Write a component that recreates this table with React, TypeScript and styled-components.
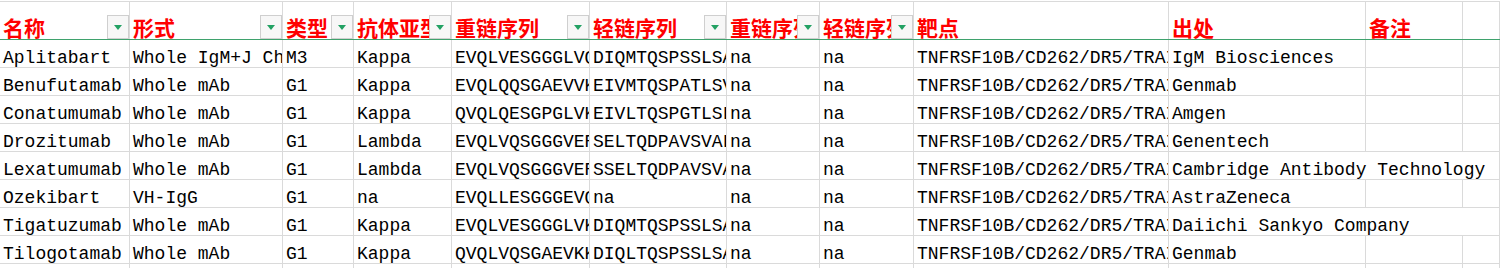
import React from "react";
import styled, { createGlobalStyle } from "styled-components";

const GlobalStyle = createGlobalStyle`
  html, body { margin: 0; padding: 0; background: #ffffff; overflow: hidden; }
  * { box-sizing: border-box; }
`;

const COLS = "130px 153px 71px 98px 138px 137px 93px 94px 255px 197px 97px 1fr";
const GRID = "#dadada";

const Sheet = styled.div`
  width: 1500px;
  height: 268px;
  overflow: hidden;
  padding-top: 1px;
`;

const HeaderRow = styled.div`
  display: grid;
  grid-template-columns: ${COLS};
  height: 39px;
  border-top: 1px solid ${GRID};
  border-bottom: 1px solid #3fa26d;
`;

const HeaderCell = styled.div`
  position: relative;
  display: flex;
  align-items: flex-end;
  overflow: hidden;
  white-space: nowrap;
  border-right: 1px solid ${GRID};
  padding: 0 0 1px 3px;
  font-family: "Noto Sans CJK SC", "Noto Sans", sans-serif;
  font-weight: 700;
  font-size: 21px;
  line-height: 1;
  color: #ff0000;
`;

const FilterButton = styled.div`
  position: absolute;
  right: 0;
  bottom: 0;
  width: 22px;
  height: 24px;
  border: 1px solid #cfcfcf;
  background: #f7f7f7;
  display: flex;
  align-items: center;
  justify-content: center;
`;

const Row = styled.div`
  display: grid;
  grid-template-columns: ${COLS};
  height: 28px;
  border-bottom: 1px solid ${GRID};
`;

const Cell = styled.div<{ $span?: number }>`
  grid-column: span ${(p) => p.$span ?? 1};
  overflow: hidden;
  white-space: nowrap;
  border-right: 1px solid ${GRID};
  padding: 9px 0 0 3px;
  font-family: "Liberation Mono", "DejaVu Sans Mono", monospace;
  font-size: 18px;
  line-height: 18px;
  color: #000000;
`;

const headers = [
  { t: "名称", f: true },
  { t: "形式", f: true },
  { t: "类型", f: true },
  { t: "抗体亚型", f: true },
  { t: "重链序列", f: true },
  { t: "轻链序列", f: true },
  { t: "重链序列ID", f: true },
  { t: "轻链序列ID", f: true },
  { t: "靶点", f: false },
  { t: "出处", f: false },
  { t: "备注", f: false },
  { t: "", f: false },
];

const TARGET = "TNFRSF10B/CD262/DR5/TRAILR2";

const rows: string[][] = [
  ["Aplitabart", "Whole IgM+J Chain", "M3", "Kappa", "EVQLVESGGGLVQPGGSLRLSCAAS", "DIQMTQSPSSLSASVGDRVTITC", "na", "na", TARGET, "IgM Biosciences"],
  ["Benufutamab", "Whole mAb", "G1", "Kappa", "EVQLQQSGAEVVKPGASVKVSCKAS", "EIVMTQSPATLSVSPGERATLSC", "na", "na", TARGET, "Genmab"],
  ["Conatumumab", "Whole mAb", "G1", "Kappa", "QVQLQESGPGLVKPSQTLSLTCTVS", "EIVLTQSPGTLSLSPGERATLSC", "na", "na", TARGET, "Amgen"],
  ["Drozitumab", "Whole mAb", "G1", "Lambda", "EVQLVQSGGGVERPGGSLRLSCAAS", "SELTQDPAVSVALGQTVRITC", "na", "na", TARGET, "Genentech"],
  ["Lexatumumab", "Whole mAb", "G1", "Lambda", "EVQLVQSGGGVERPGGSLRLSCAAS", "SSELTQDPAVSVALGQTVRITC", "na", "na", TARGET, "Cambridge Antibody Technology"],
  ["Ozekibart", "VH-IgG", "G1", "na", "EVQLLESGGGEVQPGGSLRLSCAAS", "na", "na", "na", TARGET, "AstraZeneca"],
  ["Tigatuzumab", "Whole mAb", "G1", "Kappa", "EVQLVESGGGLVKPGGSLKLSCAAS", "DIQMTQSPSSLSASVGDRVTITC", "na", "na", TARGET, "Daiichi Sankyo Company"],
  ["Tilogotamab", "Whole mAb", "G1", "Kappa", "QVQLVQSGAEVKKPGASVKVSCKAS", "DIQLTQSPSSLSASVGDRVTITC", "na", "na", TARGET, "Genmab"],
];

const Triangle = () => (
  <svg width="8" height="5" viewBox="0 0 8 5">
    <polygon points="0,0 8,0 4,5" fill="#22a163" />
  </svg>
);

export default function App() {
  return (
    <>
      <GlobalStyle />
      <Sheet>
        <HeaderRow>
          {headers.map((h, i) => (
            <HeaderCell key={i}>
              {h.t}
              {h.f && (
                <FilterButton>
                  <Triangle />
                </FilterButton>
              )}
            </HeaderCell>
          ))}
        </HeaderRow>
        {rows.map((r, ri) => {
          const spill = r[9].length * 10.8 + 3 > 197;
          return (
            <Row key={ri}>
              {r.map((v, ci) =>
                ci === 9 ? (
                  <Cell key={ci} $span={spill ? 3 : 1}>{v}</Cell>
                ) : (
                  <Cell key={ci}>{v}</Cell>
                )
              )}
              {!spill && (
                <>
                  <Cell />
                  <Cell />
                </>
              )}
            </Row>
          );
        })}
        <Row>
          {Array.from({ length: 12 }).map((_, i) => (
            <Cell key={i} />
          ))}
        </Row>
      </Sheet>
    </>
  );
}
